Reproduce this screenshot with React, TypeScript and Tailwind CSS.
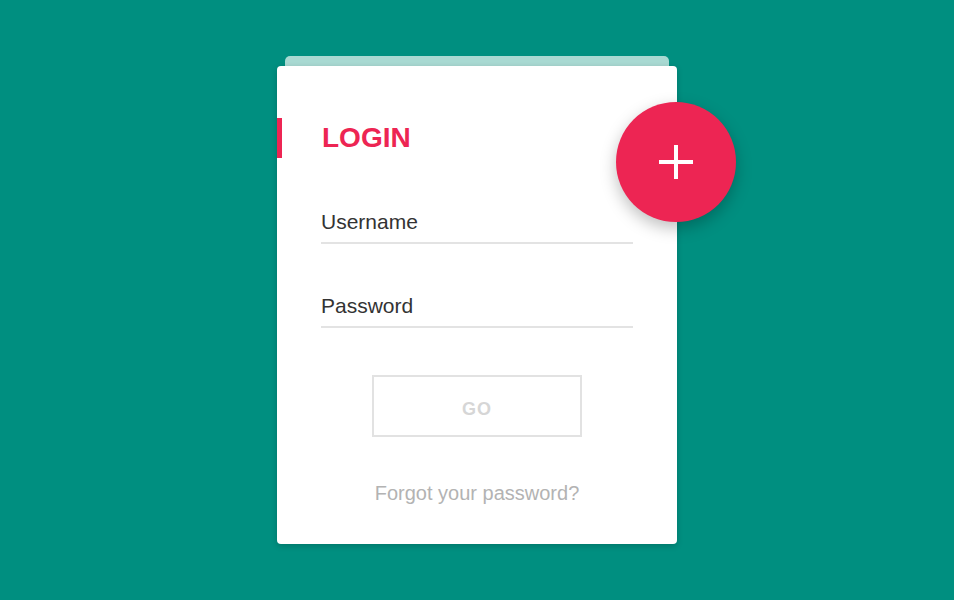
import React from "react";

export default function App() {
  return (
    <div className="h-[600px] w-full bg-[#008f80] flex items-center justify-center font-['Liberation_Sans',Arial,sans-serif]">
      <div className="w-[400px] flex flex-col">
        <div className="h-[10px] mx-2 rounded-t-[5px] bg-[#a8d9d2]" />
        <div className="relative bg-white rounded-[4px] shadow-[0_2px_6px_rgba(0,0,0,0.18)] pt-[52px] pb-[37px]">
          <div className="h-10 border-l-[5px] border-[#ed2553] pl-10 flex items-center">
            <h1 className="text-[28px] leading-10 font-bold text-[#ed2553] uppercase">Login</h1>
          </div>

          <div className="px-11">
            <div className="mt-[49px] pb-[5px] border-b-2 border-[#e3e3e3]">
              <span className="block text-[21px] leading-[30px] text-[#333]">Username</span>
            </div>
            <div className="mt-[47px] pb-[5px] border-b-2 border-[#e3e3e3]">
              <span className="block text-[21px] leading-[30px] text-[#333]">Password</span>
            </div>

            <div className="mt-[47px] flex justify-center">
              <button className="w-[210px] h-[62px] pt-[6px] border-2 border-[#e2e2e2] text-[18px] font-bold tracking-[1px] text-[#d6d6d6]">
                GO
              </button>
            </div>

            <p className="mt-[42px] text-center text-[20px] leading-7 text-[#b3b3b3]">
              Forgot your password?
            </p>
          </div>

          <button className="absolute right-[-59px] top-9 w-[120px] h-[120px] rounded-full bg-[#ed2553] shadow-[0_6px_16px_rgba(0,0,0,0.25)] flex items-center justify-center">
            <svg width="34" height="34" viewBox="0 0 34 34">
              <path d="M17 0v34M0 17h34" stroke="white" strokeWidth="4" />
            </svg>
          </button>
        </div>
      </div>
    </div>
  );
}
